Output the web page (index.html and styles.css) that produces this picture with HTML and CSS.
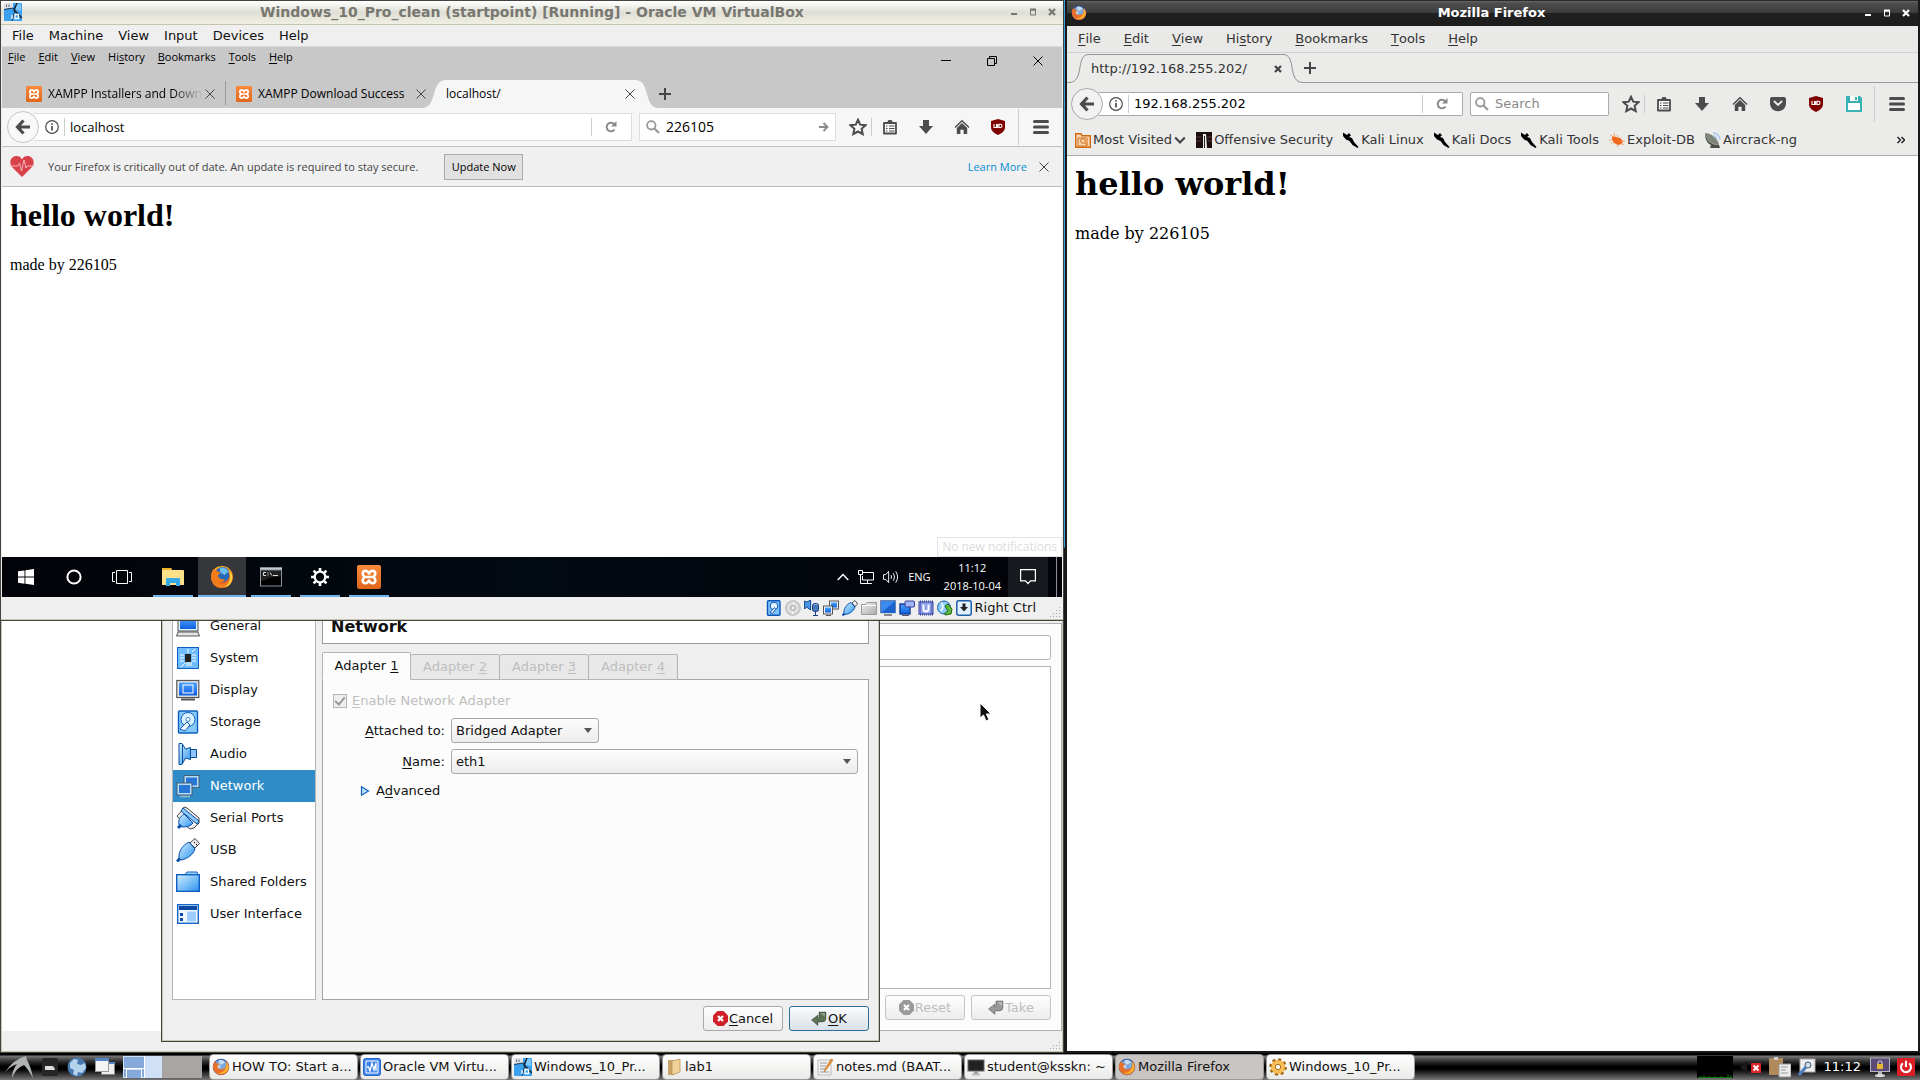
FILE: index.html
```html
<!DOCTYPE html>
<html lang="en">
<head>
<meta charset="utf-8">
<title>Desktop</title>
<link rel="stylesheet" href="styles.css">
</head>
<body>
<svg class="sprite" aria-hidden="true">
  <defs>
    <linearGradient id="blue" x1="0" y1="0" x2="1" y2="1"><stop offset="0" stop-color="#d3efff"/><stop offset="1" stop-color="#2b93f0"/></linearGradient>
    <linearGradient id="screen" x1="0" y1="0" x2="0" y2="1"><stop offset="0" stop-color="#4fa3ff"/><stop offset="1" stop-color="#0f5ee0"/></linearGradient>
    <linearGradient id="gold" x1="0" y1="0" x2="0" y2="1"><stop offset="0" stop-color="#ffb21e"/><stop offset="1" stop-color="#e0421c"/></linearGradient>
    <linearGradient id="grey" x1="0" y1="0" x2="1" y2="1"><stop offset="0" stop-color="#f2f2f2"/><stop offset="1" stop-color="#a8a8a8"/></linearGradient>
    <linearGradient id="orange" x1="0" y1="0" x2="0" y2="1"><stop offset="0" stop-color="#fb8a3c"/><stop offset="1" stop-color="#e0661a"/></linearGradient>
  </defs>
  <symbol id="i-vm10" viewBox="0 0 18 18"><rect width="18" height="18" rx="1" fill="#3aa0f0"/><path d="M11 1h6v7l-5-1z" fill="#7ec8ff"/><path d="M0 0h9v5L0 6z" fill="#dfe5ea"/><path d="M0 6.500 9 5l2 2-3 11" stroke="#22384c" fill="none"/><path d="m13 0-3 7 8 8" stroke="#16222e" stroke-width="1.500" fill="none"/><path d="M8 12v4M11 11.500h3.500v4H11z" stroke="#fff" stroke-width="1.300" fill="none"/><path d="M2.500 1.500v2.500M5 1.500v2.500" stroke="#666"/></symbol>
  <symbol id="i-firefox" viewBox="0 0 24 24"><circle cx="12" cy="12" r="11" fill="url(#gold)"/><circle cx="12.500" cy="9.500" r="7.500" fill="#2a68b8"/><path d="M10 3c4-1 8 1 9 5-2-1-3 0-4 2-3-1-6-3-5-7z" fill="#6cc0f0"/><path d="M1.500 9C2 6 3 4.500 4 4l1.500 2C7 6 8 6 9 7l2 1-3 2c0 3 3 5 7 4-1 3-4 4-7 3 3 3 9 2 11-3 1-3 0-6-1-8 4 3 5 9 2 13-4 5-12 5-16 1C1 16 1 12 1.500 9z" fill="#f07c1c"/><path d="M19 5c4 4 4 9 2 13-2 3-5 4-7 4 5-2 8-8 5-17z" fill="#ffd23c"/></symbol>
  <symbol id="i-firefox-old" viewBox="0 0 24 24"><circle cx="12" cy="12" r="11" fill="#2b4fa0"/><circle cx="12" cy="10" r="8" fill="#7fa9da"/><path d="M9 3c4-1 7 0 8 3l-3 2-4 1zM6 9l5 1v4l-4-1z" fill="#c6dcf2"/><path d="M1.500 8 4 4l2 3 4 1-3 3c1 4 5 5 9 3 3-1 4-6 2-10 5 3 6 9 3 14-4 6-13 6-17 1-3-3-3-7-2.500-11z" fill="#e8702a"/><path d="M19 5c5 6 3 12-2 15-4 2-8 1-10 0 8 1 14-6 12-15z" fill="#ffb52e"/></symbol>
  <symbol id="i-xampp" viewBox="0 0 24 24"><rect width="24" height="24" rx="2" fill="url(#orange)"/><path d="M12 8.500C11 6 8 5 6.500 6.500 5 8 5.500 10.500 8 12c-2.500 1.500-3 4-1.500 5.500S11 18 12 15.500c1 2.500 4 3.500 5.500 2S18.500 13.500 16 12c2.500-1.500 3-4 1.500-5.500S13 6 12 8.500zM9 12h6" fill="none" stroke="#fff" stroke-width="2.600" stroke-linejoin="round"/></symbol>
  <symbol id="i-close" viewBox="0 0 10 10"><path d="m.5.5 9 9m0-9-9 9" stroke="currentColor" fill="none"/></symbol>
  <symbol id="i-closeb" viewBox="0 0 8 8"><path d="m1 1 6 6m0-6L1 7" stroke="currentColor" stroke-width="2.200" fill="none"/></symbol>
  <symbol id="i-minb" viewBox="0 0 8 8"><path d="M1 6h6" stroke="currentColor" stroke-width="2"/></symbol>
  <symbol id="i-maxb" viewBox="0 0 8 8"><path d="M1.500 2v5h5V2z" stroke="currentColor" fill="none"/><path d="M1 1.500h6" stroke="currentColor" stroke-width="2"/></symbol>
  <symbol id="i-min" viewBox="0 0 10 10"><path d="M0 4.500h10" stroke="currentColor"/></symbol>
  <symbol id="i-restore" viewBox="0 0 10 10"><path d="M.5 2.500h7v7h-7zM2.500 2V.5h7v7H8" stroke="currentColor" fill="none"/></symbol>
  <symbol id="i-plus" viewBox="0 0 12 12"><path d="M6 0v12M0 6h12" stroke="currentColor" stroke-width="2"/></symbol>
  <symbol id="i-back" viewBox="0 0 16 16"><path d="M8.500 1.500 2.500 8l6 6.500M3 8h12" stroke="currentColor" stroke-width="3.200" fill="none"/></symbol>
  <symbol id="i-info" viewBox="0 0 14 14"><circle cx="7" cy="7" r="6.300" fill="none" stroke="currentColor" stroke-width="1.200"/><path d="M7 6v4.500M7 3.300v1.500" stroke="currentColor" stroke-width="1.700"/></symbol>
  <symbol id="i-reload" viewBox="0 0 12 12"><path d="M9.500 8.500A4.300 4.300 0 1 1 9 3" fill="none" stroke="currentColor" stroke-width="1.900"/><path d="M11.500 0v5.500H6z" fill="currentColor"/></symbol>
  <symbol id="i-search" viewBox="0 0 14 14"><circle cx="5.300" cy="5.300" r="4.200" fill="none" stroke="currentColor" stroke-width="1.800"/><path d="m8.500 8.500 4.500 4.500" stroke="currentColor" stroke-width="2.200"/></symbol>
  <symbol id="i-go" viewBox="0 0 10 10"><path d="M0 5h8M4.500 1l4 4-4 4" stroke="currentColor" stroke-width="1.800" fill="none"/></symbol>
  <symbol id="i-star" viewBox="0 0 16 16"><path d="m8 1.600 2 4.300 4.700.5-3.500 3.200 1 4.700L8 12l-4.200 2.300 1-4.700L1.300 6.400 6 5.900z" fill="none" stroke="currentColor" stroke-width="1.800"/></symbol>
  <symbol id="i-clip" viewBox="0 0 14 16"><path d="M1 4h12v10.500H1z" fill="#fff" fill-opacity=".6" stroke="currentColor" stroke-width="1.800" stroke-linejoin="round"/><path d="M4 3.500 5.500 1h3L10 3.500z" fill="currentColor"/><path d="M3 7h1.500M3 9.500h1.500M3 12h1.500M6 7h5.500M6 9.500h5.500M6 12h5.500" fill="none" stroke="currentColor" stroke-width="1.200"/></symbol>
  <symbol id="i-down" viewBox="0 0 14 16"><path d="M4 1h6v6h4l-7 8-7-8h4z" fill="currentColor"/></symbol>
  <symbol id="i-home" viewBox="0 0 16 16"><path d="m1 8.500 7-6.700 7 6.700" fill="none" stroke="currentColor" stroke-width="1.500"/><path d="M2.800 9 8 4l5.200 5v6H9.600v-4.300H6.400V15H2.800z" fill="currentColor"/></symbol>
  <symbol id="i-ublock" viewBox="0 0 14 16"><path d="M7 0 14 2v6c0 4-3 6-7 8-4-2-7-4-7-8V2z" fill="#800000"/><path d="M3 5v3.500h2.500V5M8 5.300h1.500c2 0 2 3.200 0 3.200H8zM6.700 9V5" fill="none" stroke="#fff" stroke-width="1.100"/></symbol>
  <symbol id="i-menu" viewBox="0 0 16 14"><path d="M1.500 1.500h13M1.500 7h13M1.500 12.500h13" stroke="currentColor" stroke-width="3" stroke-linecap="round"/></symbol>
  <symbol id="i-pocket" viewBox="0 0 16 14"><path d="M2 0h12q2 0 2 2v4c0 11-16 11-16 0V2q0-2 2-2z" fill="currentColor"/><path d="m4.500 4.500 3.500 3.500 3.500-3.500" fill="none" stroke="#ebebea" stroke-width="1.900" stroke-linecap="round"/></symbol>
  <symbol id="i-floppy" viewBox="0 0 16 16"><path d="M0 0h14l2 2v14H0z" fill="#37b3b5"/><path d="M2 7h12v7H2zM4 0h8v5H4z" fill="#fff"/><path d="M9 1h2v3H9z" fill="#37b3b5"/></symbol>
  <symbol id="i-heart" viewBox="0 0 24 21"><path d="M12 21 2 11C-2 5 2 0 6.500 0 9 0 11 1 12 3.500 13 1 15 0 17.500 0 22 0 26 5 22 11z" fill="#d8404a"/><path d="M0 10h8l1.500-3 2 8 2.500-11 2 8 1-2h7" fill="none" stroke="#f3b6b9"/></symbol>
  <symbol id="i-folder-visit" viewBox="0 0 16 16"><path d="M.7 1.700H6l1 2h8.300v11.600H.7z" fill="#fbd9b5" stroke="#d06a10" stroke-width="1.400"/><circle cx="8" cy="9" r="2.300" fill="none" stroke="#d06a10"/><path d="M10 11l2 2M3 6h9v8H3z" stroke="#d06a10" fill="none"/></symbol>
  <symbol id="i-offsec" viewBox="0 0 16 16"><path d="M0 0h16v16H0z" fill="#1c0f10"/><path d="M7 2h3l1 14H7z" fill="#eee"/><path d="M8.500 4v12" stroke="#222"/><path d="M0 5h5M11 5h5M0 9h5M12 9h4" stroke="#5a3436"/></symbol>
  <symbol id="i-kali" viewBox="0 0 16 16"><path d="M0 .5 4 3l2-2 2 2.500-2 1.500 3 1 2 4 4.500 5-1 1-5-3-3-4-3.500-1.500L0 4z" fill="#000"/></symbol>
  <symbol id="i-exploit" viewBox="0 0 16 16"><path d="m3 4 4 1 4 1 3 3-1 3-4 1-4-2-2-4z" fill="#ef6718"/><path d="m1 3 4 2m0-4 1 4M0 8h4M2 12l3-2m3-7 1 3m4-1-2 2m5 2-4 0m3 4-3-2m-3 4-1-2" stroke="#f3a77b" fill="none"/></symbol>
  <symbol id="i-dish" viewBox="0 0 16 16"><path d="M0 1c2 8 6 12 14 12l1 3H5l1-3C2 11 0 7 0 1z" fill="#4a4f45"/><path d="M0 1c6 0 13 5 14 12C7 13 2 9 0 1z" fill="#7e8578"/><path d="M8 1c4 0 7 3 7 7M8 4c2 0 4 2 4 4" fill="none" stroke="#a9c6ee" stroke-width="1.500"/></symbol>
  <symbol id="i-win" viewBox="0 0 16 16"><path d="M0 2.300 6.500 1.400v6.200H0zM7.400 1.300 16 0v7.600H7.400zM0 8.500h6.500v6.200L0 13.800zM7.400 8.500H16V16l-8.600-1.200z" fill="#fff"/></symbol>
  <symbol id="i-cortana" viewBox="0 0 16 16"><circle cx="8" cy="8" r="6.600" fill="none" stroke="#fff" stroke-width="2"/></symbol>
  <symbol id="i-taskview" viewBox="0 0 20 14"><path d="M4.500.5h11v13h-11zM3 2.500H.5v9H3M17 2.500h2.500v9H17" fill="none" stroke="#fff"/></symbol>
  <symbol id="i-explorer" viewBox="0 0 22 18"><path d="M0 1q0-1 1-1h8l1 2h11q1 0 1 1v14H0z" fill="#ffe08a"/><path d="M0 0h9l1 2H0z" fill="#f0b42c"/><path d="M4 18v-7q0-1 1-1h12q1 0 1 1v7h-4v-3H8v3z" fill="#35a9e8"/></symbol>
  <symbol id="i-cmd" viewBox="0 0 22 19"><path d="M0 0h22v19H0z" fill="#8b9299"/><path d="M1 3h20v15H1z" fill="#000"/><path d="M0 0h22v2H0z" fill="#c3cad2"/><path d="M6 5H3.500v3H6M8 5v1m0 1v1m2-3 2 3m1 0h5" stroke="#ddd" fill="none"/><path d="m1 14 10-4 10-1v-6H1z" fill="#fff" opacity=".12"/></symbol>
  <symbol id="i-gear" viewBox="0 0 18 18"><circle cx="9" cy="9" r="5.300" fill="none" stroke="#fff" stroke-width="2.200"/><path d="M9 0v3M9 15v3M0 9h3M15 9h3M2.600 2.600l2.200 2.200M13.200 13.200l2.200 2.200M2.600 15.400l2.200-2.200M13.200 4.800l2.200-2.200" stroke="#fff" stroke-width="2.600"/></symbol>
  <symbol id="i-up" viewBox="0 0 12 8"><path d="m.7 7 5.300-5.500L11.300 7" fill="none" stroke="#fff" stroke-width="1.400"/></symbol>
  <symbol id="i-net" viewBox="0 0 16 14"><path d="M5 2.500h10.500v7.500H4.500V6M9.500 10v3M6 13.500h8M.5.500h4v4h-4zM2.500 5v8.500H6" fill="none" stroke="#fff"/></symbol>
  <symbol id="i-sound" viewBox="0 0 17 14"><path d="M.5 4.500h2.500l3-3.500v12l-3-3.500H.5zM8.500 5q1.300 2 0 4M11 3q2.600 4 0 8M13.500 1q4 6 0 12" fill="none" stroke="#fff"/></symbol>
  <symbol id="i-action" viewBox="0 0 16 16"><path d="M.6.600h14.800v11.200H10.500L8 14.500l-2.500-2.700H.6z" fill="none" stroke="#fff" stroke-width="1.200"/></symbol>
  <symbol id="s-hdd" viewBox="0 0 16 16"><rect x="1.500" y=".7" width="12.500" height="14.600" rx="1" fill="#7cc4fb" stroke="#0b55b5" stroke-width="1.400"/><circle cx="8" cy="6" r="3.800" fill="#e6f5ff" stroke="#0b55b5"/><path d="m4 12.500 4.500-5 1 2-3 4z" fill="#fff" stroke="#0b55b5"/></symbol>
  <symbol id="s-cd" viewBox="0 0 16 16"><circle cx="8" cy="8" r="7.200" fill="#ddd" stroke="#aaa"/><circle cx="8" cy="8" r="2.200" fill="#f6f6f6" stroke="#999"/><path d="M8 1.500 9 5M8 14.500 7 11" stroke="#fff"/></symbol>
  <symbol id="s-audio" viewBox="0 0 16 16"><path d="M.6 1v8l2-2 4 3V0L3 2z" fill="#4a95e8" stroke="#12488f"/><rect x="8.500" y="3.500" width="6" height="8" rx="2" fill="#7fb4ee" stroke="#173f7c"/><path d="M9 6h5M9 8h5M9 10h5M11.500 12v3M9 15.500h5" stroke="#173f7c"/></symbol>
  <symbol id="s-net" viewBox="0 0 16 16"><rect x="6.500" y="1" width="9" height="8" fill="#f2f2f2" stroke="#555"/><rect x="8" y="2.500" width="6" height="5" fill="url(#screen)"/><rect x=".5" y="6" width="9" height="8" fill="#f2f2f2" stroke="#555"/><rect x="2" y="7.500" width="6" height="5" fill="url(#screen)"/><path d="M3 15.500h5" stroke="#555"/></symbol>
  <symbol id="s-usb" viewBox="0 0 16 16"><path d="m10 3 3-2.500L15.700 4 13 6.500z" fill="#eee" stroke="#555"/><path d="M2 14C1 9 5 4 9 2.500L13 7c-2 5-6 7-10 7.500z" fill="url(#blue)" stroke="#0b4fa8"/><path d="m.5 15.500 2-2" stroke="#0b4fa8" stroke-width="2"/></symbol>
  <symbol id="s-folder" viewBox="0 0 16 16"><path d="M.5 4.500h4l1.500-2h9.500v12H.5z" fill="url(#grey)" stroke="#999"/><path d="M1 5.500h14" stroke="#fff"/></symbol>
  <symbol id="s-display" viewBox="0 0 16 16"><rect x=".7" y=".7" width="14.600" height="12" fill="#3d8bf0" stroke="#4c6ea0"/><path d="M1 13 15 1v12z" fill="#1c62cf"/><path d="M4 15h8" stroke="#888" stroke-width="2"/></symbol>
  <symbol id="s-rec" viewBox="0 0 16 16"><rect x="1" y="4" width="10" height="10" fill="url(#screen)" stroke="#103f94" stroke-width="1.400"/><rect x="6" y="1" width="9.500" height="6" rx="1" fill="#9fb3ee" stroke="#3c3c9f"/><path d="M3 15.500h7" stroke="#555"/></symbol>
  <symbol id="s-chip" viewBox="0 0 16 16"><path d="M1 1.500v13h14v-13z" fill="none" stroke="#3947a5" stroke-width="2" stroke-dasharray="1 1"/><rect x="2" y="2" width="12" height="12" fill="#8f9fea" stroke="#3947a5"/><path d="M5.500 4.500V9q0 2.500 2.500 2.500T10.500 9V4.500" fill="none" stroke="#fff" stroke-width="2"/></symbol>
  <symbol id="s-mouse" viewBox="0 0 16 16"><circle cx="7" cy="7.500" r="6.500" fill="#8ccafa" stroke="#1d5fae"/><path d="M4 3q4 3 0 8" stroke="#e8f6ff" stroke-width="2" fill="none"/><path d="m8 6 3-2 4 5-1 5-6 1v-2l3-2z" fill="#5dbb3c" stroke="#1e6516"/></symbol>
  <symbol id="s-key" viewBox="0 0 16 16"><rect x=".8" y=".8" width="14.400" height="14.400" rx="2" fill="#e2f1ff" stroke="#1f5da8" stroke-width="1.500"/><path d="M6.500 3.500h3V7H12l-4 4.500L4 7h2.500z" fill="#222"/></symbol>
  <symbol id="d-general" viewBox="0 0 24 24"><rect x="2" y="2" width="20" height="15" fill="#dff0ff" stroke="#555"/><rect x="4" y="4" width="16" height="11" fill="url(#screen)"/><path d="M2 18h20l1.500 4h-23z" fill="#e4e4e4" stroke="#555"/></symbol>
  <symbol id="d-system" viewBox="0 0 24 24"><rect x="1.500" y="1.500" width="21" height="21" fill="#6fbcff" stroke="#0f5fc0"/><path d="M12 3v4M4 9h4M4 12h4M4 15h4M16 9h4M16 12h4M16 15h4M11 16v4M13 16v4M15 16v4M9 17l-4 4M16 6l3-3" stroke="#fff"/><rect x="9" y="8" width="6" height="8" fill="#222"/></symbol>
  <symbol id="d-display" viewBox="0 0 24 24"><rect x=".8" y="2.500" width="22" height="17" fill="#e8e8e8" stroke="#555" stroke-width="1.200"/><rect x="3" y="4.500" width="18" height="13" fill="url(#screen)"/><rect x="7" y="7" width="10" height="8" fill="none" stroke="#fff"/><path d="M5 21.500h14" stroke="#555" stroke-width="2"/></symbol>
  <symbol id="d-storage" viewBox="0 0 24 24"><rect x="2.500" y="1" width="19" height="22" rx="1" fill="#86c9fc" stroke="#0f5fc0" stroke-width="1.400"/><circle cx="12" cy="9.500" r="7" fill="#d8efff" stroke="#0f5fc0"/><circle cx="12" cy="9.500" r="2" fill="#fff" stroke="#3c82c8"/><path d="m4 19 7-7 3 3-5 6z" fill="#f2faff" stroke="#0f5fc0"/></symbol>
  <symbol id="d-audio" viewBox="0 0 24 24"><path d="M14 7.500h6.500v8H14z" fill="#8fc6f8" stroke="#0b4b96"/><path d="M3 1.500h3L9.500 7l5-1.500v12L9.500 16 6 22.500H3z" fill="url(#blue)" stroke="#0b4b96"/><path d="M6.500 2v20" stroke="#0b4b96"/></symbol>
  <symbol id="d-network" viewBox="0 0 24 24"><rect x="8" y="1.500" width="15" height="12" fill="#b9dcf5" stroke="#3f5f7a"/><rect x="10" y="3.500" width="11" height="8" fill="#2677d8"/><rect x="1" y="9" width="15" height="12" fill="#b9dcf5" stroke="#3f5f7a"/><rect x="3" y="11" width="11" height="8" fill="#2677d8"/><path d="M4 22.500h10" stroke="#9db8cc" stroke-width="1.500"/></symbol>
  <symbol id="d-serial" viewBox="0 0 24 24"><path d="m1 10 3-3 4-6 3 1 12 10v5l-5 5-4 1-4-3z" fill="#eee" stroke="#444"/><path d="M3 19c-1-6 1-8 5-11l9 9c-2 3-6 4-11 4z" fill="url(#blue)" stroke="#0b4fa8"/><path d="m7 2 16 13-2 3L5 5z" fill="#8cc9fb" stroke="#0b4fa8"/><path d="m2 22 3-3" stroke="#0b4fa8" stroke-width="3"/></symbol>
  <symbol id="d-usb" viewBox="0 0 24 24"><path d="m14 5 5-4.500 4.500 5L19 10z" fill="#eee" stroke="#444"/><path d="M3 21C2 13 7 7 13 4l6 7c-2 6-8 10-14 11z" fill="url(#blue)" stroke="#0b4fa8"/><path d="m1 23.500 3-3" stroke="#0b4fa8" stroke-width="3"/><path d="M18 4.500h1M20 6.500h1" stroke="#222" stroke-width="1.500"/></symbol>
  <symbol id="d-folder" viewBox="0 0 24 24"><path d="M9 5l2-3h10l1 3" fill="#9fd6ff" stroke="#0f5fc0"/><rect x=".7" y="4.700" width="22.600" height="16.600" fill="url(#blue)" stroke="#0f5fc0" stroke-width="1.400"/></symbol>
  <symbol id="d-ui" viewBox="0 0 24 24"><rect x="1.700" y="2.700" width="20.600" height="18.600" fill="#f0f8ff" stroke="#1565c8" stroke-width="1.400"/><path d="M3 4h18v4H3z" fill="#0d49a0"/><rect x="11" y="9.500" width="9" height="10" fill="#9fccff"/><path d="M4 11h3v3H4zM4 16h3v3H4z" fill="#0d49a0"/></symbol>
  <symbol id="i-cancel" viewBox="0 0 15 15"><path d="M4.500 0h6L15 4.500v6L10.500 15h-6L0 10.500v-6z" fill="currentColor"/><path d="m5 5 5 5m0-5-5 5" stroke="#fff" stroke-width="2.200"/></symbol>
  <symbol id="i-enter" viewBox="0 0 16 16"><path d="M8 1h7v6q0 4-4 4H7v3.500L.5 9 7 4v3h1z" fill="currentColor" stroke="#0000004d"/><path d="M9 2h5v4z" fill="#fff" opacity=".3"/></symbol>
  <symbol id="t-kali" viewBox="0 0 28 22"><path d="M0 16Q9 3 21 0l1 4q4 7 6 18-5-9-9-13Q11 12 7 22q0-8 5-14Q6 10 0 16z" fill="#aeb2b0"/></symbol>
  <symbol id="t-term" viewBox="0 0 16 18"><rect width="16" height="18" rx="2" fill="#262626"/><path d="M3 8h7q2 0 3 4H3z" fill="#ddd"/></symbol>
  <symbol id="t-globe" viewBox="0 0 20 20"><circle cx="10" cy="10" r="9.500" fill="#4878ae"/><path d="m3 6 4-4 4 1-1 4 4 1 4-2 1 5-4 5-4-1-1 4-4-2 1-4-4-2z" fill="#b6d3ee"/></symbol>
  <symbol id="t-wins" viewBox="0 0 20 18"><rect x="6.500" y="4.500" width="13" height="12" fill="#eee" stroke="#888"/><path d="M6 4h14v2H6z" fill="#5685c4"/><rect x=".5" y="1.500" width="13" height="12" fill="#f4f4f4" stroke="#999"/><path d="M0 0h14v3H0z" fill="#5685c4"/></symbol>
  <symbol id="t-vbox" viewBox="0 0 18 18"><rect x=".5" y=".5" width="17" height="17" rx="2" fill="#3b82ea" stroke="#2867c5"/><path d="M3 3h12v12H3z" fill="none" stroke="#fff"/><path d="M4 9h1.500l1.500 4 2-8 2 7 2-7v8" fill="none" stroke="#fff" stroke-width="1.300"/></symbol>
  <symbol id="t-folder" viewBox="0 0 18 18"><path d="M3 2h6v15H3z" fill="#c9a368"/><path d="m7 3 8-2v13l-8 3z" fill="#efd19a" stroke="#b58b4c" stroke-width=".700"/></symbol>
  <symbol id="t-note" viewBox="0 0 18 18"><path d="M2 2h13v15H2z" fill="#f2f2f2" stroke="#bbb"/><path d="M4 5h7M4 8h6M4 11h6M4 14h9" stroke="#999"/><path d="m17 2-7 10-2 2 1-3 6-10z" fill="#ef9430" stroke="#b6651a" stroke-width=".500"/></symbol>
  <symbol id="t-screen" viewBox="0 0 18 18"><rect x="1" y="2" width="16" height="11" fill="#222" stroke="#666"/><path d="M7 13h4v3H7z" fill="#999"/><path d="M5 16.500h8" stroke="#bbb" stroke-width="2"/></symbol>
  <symbol id="t-gear" viewBox="0 0 20 20"><circle cx="10" cy="10" r="8" fill="#f4b342" stroke="#a0620e" stroke-width="3.500" stroke-dasharray="3.140 3.140"/><circle cx="10" cy="10" r="7.500" fill="#f7bf57"/><circle cx="10" cy="10" r="3" fill="#fff" stroke="#a0620e"/></symbol>
  <symbol id="y-mute" viewBox="0 0 22 18"><path d="M0 9 7 3v13z" fill="#1a1a1a"/><rect x="11" y="5" width="10" height="10" rx="1" fill="#d8262c"/><path d="m13.500 7.500 5 5m0-5-5 5" stroke="#fff" stroke-width="1.800"/></symbol>
  <symbol id="y-clip" viewBox="0 0 22 20"><rect x="0" y="1" width="14" height="17" fill="#b08a5c"/><path d="M5 0h4v3H5z" fill="#ccc"/><path d="M10 7h12v13H10z" fill="#ececec" stroke="#999"/><path d="M12 10h7M12 13h5M12 16h7" stroke="#999"/></symbol>
  <symbol id="y-find" viewBox="0 0 18 18"><rect x="2" y="1" width="15" height="13" fill="#eee" stroke="#aaa"/><circle cx="10" cy="7" r="3" fill="#cde" stroke="#456"/><path d="m8 9-7 8" stroke="#4c7ec0" stroke-width="3"/></symbol>
  <symbol id="y-lock" viewBox="0 0 20 20"><rect x=".5" y="1" width="19" height="13.500" fill="#5b4a77" stroke="#b9b3c4"/><path d="M8 7V5q2-2.500 4 0v2" stroke="#ddd" fill="none"/><rect x="7" y="7" width="6" height="5" fill="#e6b62e"/><path d="M8 15h4v3H8z" fill="#bbb"/><ellipse cx="10" cy="18.500" rx="5" ry="1.500" fill="#ddd"/></symbol>
  <symbol id="y-power" viewBox="0 0 17 17"><rect width="17" height="17" rx="1" fill="#dc1f26"/><path d="M5.500 5a4.700 4.700 0 1 0 6 0M8.500 2.500v6" fill="none" stroke="#fff" stroke-width="2"/></symbol>
</svg>

<main class="desktop">
  <section class="left-pane">

    <section class="window vm" aria-label="Virtual machine">
      <header class="titlebar light">
        <svg class="i18"><use href="#i-vm10"/></svg>
        <h2 class="title">Windows_10_Pro_clean (startpoint) [Running] - Oracle VM VirtualBox</h2>
        <div class="wm-buttons">
          <button aria-label="Minimize"><svg class="i8"><use href="#i-minb"/></svg></button>
          <button aria-label="Maximize"><svg class="i8"><use href="#i-maxb"/></svg></button>
          <button aria-label="Close"><svg class="i8"><use href="#i-closeb"/></svg></button>
        </div>
      </header>
      <nav class="vm-menu">
        <button>File</button><button>Machine</button><button>View</button><button>Input</button><button>Devices</button><button>Help</button>
      </nav>

      <div class="guest">
        <div class="guest-top">
          <nav class="guest-menu">
            <button><u>F</u>ile</button><button><u>E</u>dit</button><button><u>V</u>iew</button><button>Hi<u>s</u>tory</button><button><u>B</u>ookmarks</button><button><u>T</u>ools</button><button><u>H</u>elp</button>
          </nav>
          <div class="guest-controls">
            <button aria-label="Minimize"><svg class="i10"><use href="#i-min"/></svg></button>
            <button aria-label="Restore"><svg class="i10"><use href="#i-restore"/></svg></button>
            <button aria-label="Close"><svg class="i10"><use href="#i-close"/></svg></button>
          </div>
        </div>
        <div class="guest-tabs">
          <div class="gtab split"><svg class="i16"><use href="#i-xampp"/></svg><button class="gtab-label fade">XAMPP Installers and Downl</button><button class="x" aria-label="Close tab"><svg class="i10"><use href="#i-close"/></svg></button></div>
          <div class="gtab"><svg class="i16"><use href="#i-xampp"/></svg><button class="gtab-label">XAMPP Download Success</button><button class="x" aria-label="Close tab"><svg class="i10"><use href="#i-close"/></svg></button></div>
          <div class="gtab active">
            <svg class="edge" viewBox="0 0 24 28"><path d="M0 28c16 0 8-28 24-28v28z" fill="#f6f6f6"/></svg>
            <div class="gtab-body"><button class="gtab-label">localhost/</button><button class="x" aria-label="Close tab"><svg class="i10"><use href="#i-close"/></svg></button></div>
            <svg class="edge" viewBox="0 0 24 28"><path d="M24 28C8 28 16 0 0 0v28z" fill="#f6f6f6"/></svg>
          </div>
          <button class="newtab" aria-label="New tab"><svg class="i12"><use href="#i-plus"/></svg></button>
        </div>
        <div class="guest-nav">
          <button class="back" aria-label="Back"><svg class="i16"><use href="#i-back"/></svg></button>
          <div class="field url">
            <svg class="i14"><use href="#i-info"/></svg><i class="bar"></i>
            <input type="text" aria-label="Address" value="localhost">
            <i class="bar"></i><button class="reload" aria-label="Reload"><svg class="i12"><use href="#i-reload"/></svg></button>
          </div>
          <div class="field search">
            <svg class="i14"><use href="#i-search"/></svg>
            <input type="text" aria-label="Search" value="226105">
            <button aria-label="Go"><svg class="i10"><use href="#i-go"/></svg></button>
          </div>
          <div class="tools">
            <button class="t-star" aria-label="Bookmark"><svg class="i18"><use href="#i-star"/></svg></button><i class="bar"></i>
            <button aria-label="Bookmarks list"><svg class="i16"><use href="#i-clip"/></svg></button>
            <button aria-label="Downloads"><svg class="i16"><use href="#i-down"/></svg></button>
            <button aria-label="Home"><svg class="i16"><use href="#i-home"/></svg></button>
            <button aria-label="Blocker"><svg class="i16"><use href="#i-ublock"/></svg></button>
            <i class="bar tall"></i>
            <button class="t-menu" aria-label="Menu"><svg class="i16"><use href="#i-menu"/></svg></button>
          </div>
        </div>
        <div class="notice">
          <svg class="heart"><use href="#i-heart"/></svg>
          <p>Your Firefox is critically out of date. An update is required to stay secure.</p>
          <button class="update">Update Now</button>
          <a href="#" class="learn">Learn More</a>
          <button aria-label="Dismiss"><svg class="i10"><use href="#i-close"/></svg></button>
        </div>
        <article class="page guest-page">
          <h1>hello world!</h1>
          <p>made by 226105</p>
          <div class="tooltip">No new notifications</div>
        </article>
        <footer class="guest-taskbar">
          <button class="w-btn wide" aria-label="Start"><svg class="i16"><use href="#i-win"/></svg></button>
          <button class="w-btn wide" aria-label="Cortana"><svg class="i16"><use href="#i-cortana"/></svg></button>
          <button class="w-btn wide" aria-label="Task view"><svg class="i20"><use href="#i-taskview"/></svg></button>
          <button class="w-btn run" aria-label="Explorer"><svg class="i22"><use href="#i-explorer"/></svg></button>
          <button class="w-btn run current" aria-label="Firefox"><svg class="i24"><use href="#i-firefox"/></svg></button>
          <button class="w-btn run" aria-label="Command Prompt"><svg class="i22"><use href="#i-cmd"/></svg></button>
          <button class="w-btn run" aria-label="Settings"><svg class="i18"><use href="#i-gear"/></svg></button>
          <button class="w-btn run" aria-label="XAMPP"><svg class="i24"><use href="#i-xampp"/></svg></button>
          <div class="w-tray">
            <svg class="i12"><use href="#i-up"/></svg>
            <svg class="i16"><use href="#i-net"/></svg>
            <svg class="i16"><use href="#i-sound"/></svg>
            <span>ENG</span>
            <time>11:12<br>2018-10-04</time>
            <button class="action" aria-label="Notifications"><svg class="i16"><use href="#i-action"/></svg></button>
          </div>
        </footer>
      </div>

      <footer class="vm-status">
        <svg class="i16"><use href="#s-hdd"/></svg><svg class="i16"><use href="#s-cd"/></svg><svg class="i16"><use href="#s-audio"/></svg><svg class="i16"><use href="#s-net"/></svg><svg class="i16"><use href="#s-usb"/></svg><svg class="i16"><use href="#s-folder"/></svg><svg class="i16"><use href="#s-display"/></svg><svg class="i16"><use href="#s-rec"/></svg><svg class="i16"><use href="#s-chip"/></svg><svg class="i16"><use href="#s-mouse"/></svg><svg class="i16"><use href="#s-key"/></svg>
        <span>Right Ctrl</span>
        <i class="grip"></i>
      </footer>
    </section>

    <section class="window settings" aria-label="Settings">
      <div class="settings-body">
        <ul class="categories">
          <li><svg class="i24"><use href="#d-general"/></svg>General</li>
          <li><svg class="i24"><use href="#d-system"/></svg>System</li>
          <li><svg class="i24"><use href="#d-display"/></svg>Display</li>
          <li><svg class="i24"><use href="#d-storage"/></svg>Storage</li>
          <li><svg class="i24"><use href="#d-audio"/></svg>Audio</li>
          <li class="selected"><svg class="i24"><use href="#d-network"/></svg>Network</li>
          <li><svg class="i24"><use href="#d-serial"/></svg>Serial Ports</li>
          <li><svg class="i24"><use href="#d-usb"/></svg>USB</li>
          <li><svg class="i24"><use href="#d-folder"/></svg>Shared Folders</li>
          <li><svg class="i24"><use href="#d-ui"/></svg>User Interface</li>
        </ul>
        <div class="details">
          <h3>Network</h3>
          <div class="adapter-tabs">
            <button class="active">Adapter <u>1</u></button><button disabled>Adapter <u>2</u></button><button disabled>Adapter <u>3</u></button><button disabled>Adapter <u>4</u></button>
          </div>
          <form class="adapter">
            <label class="enable"><input type="checkbox" checked disabled><span><u>E</u>nable Network Adapter</span></label>
            <label class="row-label" for="attached"><u>A</u>ttached to:</label>
            <div class="select short"><select id="attached"><option>Bridged Adapter</option></select></div>
            <label class="row-label" for="ifname"><u>N</u>ame:</label>
            <div class="select"><select id="ifname"><option>eth1</option></select></div>
            <button type="button" class="advanced"><svg class="i10" viewBox="0 0 10 10"><path d="M1.500.8v8.400l7-4.200z" fill="#bfe2ff" stroke="#0f5fc0" stroke-width="1.200"/></svg><span>A<u>d</u>vanced</span></button>
          </form>
        </div>
      </div>
      <div class="dialog-buttons">
        <button class="push"><svg class="i15 red"><use href="#i-cancel"/></svg><span><u>C</u>ancel</span></button>
        <button class="push default"><svg class="i16 green"><use href="#i-enter"/></svg><span><u>O</u>K</span></button>
      </div>
    </section>

    <section class="window manager" aria-label="Manager">
      <div class="machines"></div>
      <div class="snapshot">
        <input type="text" aria-label="Name">
        <textarea aria-label="Description"></textarea>
        <div class="snapshot-buttons">
          <button class="push" disabled><svg class="i15"><use href="#i-cancel"/></svg>Reset</button>
          <button class="push" disabled><svg class="i16"><use href="#i-enter"/></svg>Take</button>
        </div>
      </div>
      <i class="grip"></i>
    </section>
    <svg class="pointer" viewBox="0 0 12 20"><path d="M1 0v15l3.500-3 2.500 6 3-1.500-2.700-5.500H12z" fill="#111" stroke="#fff"/></svg>
  </section>

  <section class="browser" aria-label="Mozilla Firefox">
    <header class="titlebar dark">
      <svg class="i16"><use href="#i-firefox-old"/></svg>
      <h2 class="title">Mozilla Firefox</h2>
      <div class="wm-buttons">
        <button aria-label="Minimize"><svg class="i8"><use href="#i-minb"/></svg></button>
        <button aria-label="Maximize"><svg class="i8"><use href="#i-maxb"/></svg></button>
        <button aria-label="Close"><svg class="i8"><use href="#i-closeb"/></svg></button>
      </div>
    </header>
    <nav class="b-menu">
      <button><u>F</u>ile</button><button><u>E</u>dit</button><button><u>V</u>iew</button><button>Hi<u>s</u>tory</button><button><u>B</u>ookmarks</button><button><u>T</u>ools</button><button><u>H</u>elp</button>
    </nav>
    <div class="b-tabs">
      <i class="rule start"></i>
      <div class="b-tab">
        <svg class="edge" viewBox="0 0 20 29"><path d="M0 28.500C16 28.500 6 .5 20 .5" fill="none" stroke="#8f8f8f"/></svg>
        <div class="b-tab-body"><button>http://192.168.255.202/</button><button class="x" aria-label="Close tab"><svg class="i8"><use href="#i-closeb"/></svg></button></div>
        <svg class="edge" viewBox="0 0 20 29"><path d="M20 28.500C4 28.500 14 .5 0 .5" fill="none" stroke="#8f8f8f"/></svg>
      </div>
      <div class="rule"><button class="newtab" aria-label="New tab"><svg class="i12"><use href="#i-plus"/></svg></button></div>
    </div>
    <div class="b-nav">
      <button class="back" aria-label="Back"><svg class="i16"><use href="#i-back"/></svg></button>
      <div class="field url">
        <svg class="i14"><use href="#i-info"/></svg><i class="bar"></i>
        <input type="text" aria-label="Address" value="192.168.255.202">
        <i class="bar"></i><button class="reload" aria-label="Reload"><svg class="i12"><use href="#i-reload"/></svg></button>
      </div>
      <div class="field search">
        <svg class="i14"><use href="#i-search"/></svg>
        <input type="text" aria-label="Search" placeholder="Search">
      </div>
      <div class="tools">
        <button class="t-star" aria-label="Bookmark"><svg class="i18"><use href="#i-star"/></svg></button><i class="bar"></i>
        <button aria-label="Bookmarks list"><svg class="i16"><use href="#i-clip"/></svg></button>
        <button aria-label="Downloads"><svg class="i16"><use href="#i-down"/></svg></button>
        <button aria-label="Home"><svg class="i16"><use href="#i-home"/></svg></button>
        <button aria-label="Pocket"><svg class="i16"><use href="#i-pocket"/></svg></button>
        <button aria-label="Blocker"><svg class="i16"><use href="#i-ublock"/></svg></button>
        <button aria-label="Save"><svg class="i16"><use href="#i-floppy"/></svg></button>
        <i class="bar tall"></i>
        <button class="t-menu" aria-label="Menu"><svg class="i16"><use href="#i-menu"/></svg></button>
      </div>
    </div>
    <nav class="bookmarks">
      <button><svg class="i16"><use href="#i-folder-visit"/></svg>Most Visited<svg class="i12" viewBox="0 0 10 10"><path d="m1 3 4 4 4-4" fill="none" stroke="#444" stroke-width="1.800"/></svg></button>
      <a href="#"><svg class="i16"><use href="#i-offsec"/></svg>Offensive Security</a>
      <a href="#"><svg class="i16"><use href="#i-kali"/></svg>Kali Linux</a>
      <a href="#"><svg class="i16"><use href="#i-kali"/></svg>Kali Docs</a>
      <a href="#"><svg class="i16"><use href="#i-kali"/></svg>Kali Tools</a>
      <a href="#"><svg class="i16"><use href="#i-exploit"/></svg>Exploit-DB</a>
      <a href="#"><svg class="i16"><use href="#i-dish"/></svg>Aircrack-ng</a>
      <button class="more" aria-label="More bookmarks"><svg class="i8" viewBox="0 0 8 8"><path d="m.5 1 3 3-3 3M4.500 1l3 3-3 3" fill="none" stroke="#111" stroke-width="1.300"/></svg></button>
    </nav>
    <article class="page host-page">
      <h1>hello world!</h1>
      <p>made by 226105</p>
    </article>
  </section>
</main>

<footer class="panel">
  <div class="launch">
    <button aria-label="Menu"><svg class="kali-menu"><use href="#t-kali"/></svg></button>
    <button aria-label="Terminal"><svg class="i18"><use href="#t-term"/></svg></button>
    <button aria-label="Web"><svg class="i20"><use href="#t-globe"/></svg></button>
    <button aria-label="Windows"><svg class="i20"><use href="#t-wins"/></svg></button>
    <svg class="pager" viewBox="0 0 79 22"><path d="M0 0h39v22H0z" fill="#cfe0f7"/><path d="M1 1h20v11H1zM1 13h2v8H1zM4 14h15v8H4zM19 13h2v8h-2z" fill="#84a9da"/><path d="M21.500 0v22M0 12.500h21M3.500 13v9M18.500 13v9" stroke="#fff" fill="none"/><path d="M39 0h40v22H39z" fill="#a8a5a2"/></svg>
  </div>
  <div class="tasks">
    <button><svg class="i18"><use href="#i-firefox-old"/></svg><span>HOW TO: Start a...</span></button>
    <button><svg class="i18"><use href="#t-vbox"/></svg><span>Oracle VM Virtu...</span></button>
    <button><svg class="i18"><use href="#i-vm10"/></svg><span>Windows_10_Pr...</span></button>
    <button><svg class="i18"><use href="#t-folder"/></svg><span>lab1</span></button>
    <button><svg class="i18"><use href="#t-note"/></svg><span>notes.md (BAAT...</span></button>
    <button><svg class="i18"><use href="#t-screen"/></svg><span>student@ksskn: ~</span></button>
    <button class="pressed"><svg class="i18"><use href="#i-firefox-old"/></svg><span>Mozilla Firefox</span></button>
    <button><svg class="i18"><use href="#t-gear"/></svg><span>Windows_10_Pr...</span></button>
  </div>
  <div class="tray">
    <svg class="cpu" viewBox="0 0 36 22"><path d="M0 0h36v22H0z" fill="#000"/><path d="M1 21.500h34M3 21v-1M7 21v-2M12 21v-1M18 21v-1M24 21v-1M31 21v-3M34 21v-2" stroke="#0a7a0a"/></svg>
    <svg class="i22"><use href="#y-mute"/></svg>
    <svg class="i22"><use href="#y-clip"/></svg>
    <svg class="i18"><use href="#y-find"/></svg>
    <time>11:12</time>
    <svg class="i20"><use href="#y-lock"/></svg>
    <svg class="i18"><use href="#y-power"/></svg>
  </div>
</footer>
</body>
</html>
```
FILE: styles.css
```css
* { box-sizing: border-box; }

body {
  margin: 0;
  height: 100vh;
  display: grid;
  grid-template-rows: minmax(0, 1fr) 27px;
  overflow: hidden;
  font: 13px/16px "DejaVu Sans", sans-serif;
  color: #111;
  background: #111;
}

button, input, select, textarea { font: inherit; color: inherit; }
button {
  border: 0;
  padding: 0;
  background: none;
  display: inline-flex;
  align-items: center;
  justify-content: center;
  white-space: nowrap;
}
input { border: 0; padding: 0; background: none; outline: 0; min-width: 0; }
a { color: inherit; text-decoration: none; }
h1, h2, h3, p, ul { margin: 0; padding: 0; }
svg { display: block; flex: none; }
u { text-underline-offset: 2px; }

.sprite { position: absolute; width: 0; height: 0; }
.i8 { width: 8px; height: 8px; }
.i10 { width: 10px; height: 10px; }
.i12 { width: 12px; height: 12px; }
.i14 { width: 14px; height: 14px; }
.i15 { width: 15px; height: 15px; }
.i16 { width: 16px; height: 16px; }
.i18 { width: 18px; height: 18px; }
.i20 { width: 20px; height: 20px; }
.i22 { width: 22px; height: 22px; }
.i24 { width: 24px; height: 24px; }

.desktop {
  display: grid;
  grid-template-columns: minmax(0, 1064fr) minmax(0, 856fr);
  grid-template-rows: minmax(0, 1fr);
}
.left-pane {
  position: relative;
  display: grid;
  grid-template-columns: minmax(0, 1fr);
  grid-template-rows: minmax(0, 621fr) minmax(0, 432fr);
}

/* window frames */
.window {
  display: flex;
  flex-direction: column;
  border: 1px solid #44433f;
  background: #efefef;
  grid-column: 1;
  min-width: 0;
}
.titlebar {
  flex: none;
  display: flex;
  align-items: center;
  padding: 0 7px 0 3px;
}
.titlebar .title {
  flex: 1;
  padding-left: 32px;
  text-align: center;
  font-size: 13px;
  line-height: 16px;
  font-weight: bold;
  white-space: nowrap;
}
.titlebar.light {
  height: 24px;
  padding-bottom: 2px;
  background: linear-gradient(#fff, #dfdfd6 50%, #efefe4);
  border-bottom: 1px solid #c6c6ae;
  color: #77766f;
}
.titlebar.light .title { font-size: 14px; }
.titlebar.dark {
  height: 26px;
  padding: 0 8px 2px 4px;
  border-top: 1px solid #2a2a2a;
  background: linear-gradient(#666, #4e4e4e 8%, #3c3c3c 46%, #202020 50%, #1c1c1c);
  color: #fff;
}
.wm-buttons { display: flex; gap: 11px; }

/* virtual machine */
.vm { grid-row: 1; z-index: 2; }
.vm-menu {
  flex: none;
  display: flex;
  gap: 15px;
  height: 22px;
  padding-left: 11px;
  border-bottom: 1px solid #d9d9d9;
}
.guest {
  flex: 1;
  min-height: 0;
  display: flex;
  flex-direction: column;
  margin: 0 1px;
  font-family: "Open Sans", "Noto Sans", sans-serif;
  background: #c8c8c8;
  color: #000;
}
.guest-top {
  flex: none;
  display: flex;
  justify-content: space-between;
  height: 33px;
}
.guest-menu {
  display: flex;
  gap: 13px;
  padding-left: 6px;
  height: 20px;
  font-size: 11px;
}
.guest-controls { display: flex; gap: 36px; padding: 9px 19px 0 0; align-items: flex-start; }
.guest-tabs {
  flex: none;
  display: flex;
  height: 28px;
  padding-left: 14px;
  font-size: 12px;
}
.gtab {
  display: flex;
  align-items: center;
  width: 210px;
  padding: 0 10px;
  color: #000;
}
.gtab.split { border-right: 1px solid #999; border-image: linear-gradient(transparent 8%, #999 8%, #999 85%, transparent 85%) 1; }
.gtab-label { flex: 1; min-width: 0; justify-content: flex-start; overflow: hidden; margin: 0 6px; }
.gtab-label.fade {
  margin-right: 2px;
  -webkit-mask-image: linear-gradient(to right, #000 80%, transparent);
  mask-image: linear-gradient(to right, #000 80%, transparent);
}
.x { color: #444; }
.gtab.active { width: 237px; padding: 0; margin-left: -14px; }
.gtab .edge { width: 24px; height: 28px; }
.gtab-body { flex: 1; display: flex; align-self: stretch; background: #f6f6f6; }
.gtab-body .gtab-label { margin: 0; }
.newtab { color: #444; }

.guest-nav, .b-nav {
  flex: none;
  display: flex;
  align-items: center;
  color: #4c4c4c;
}
.guest-nav { height: 39px; padding-left: 5px; background: #f6f6f6; border-bottom: 1px solid #c0c0c0; font-size: 13px; }
.back {
  flex: none;
  width: 32px;
  height: 32px;
  margin-right: -5px;
  border: 1px solid #c6c6c6;
  border-radius: 50%;
  background: #f9f9f9;
  z-index: 1;
}
.field {
  display: flex;
  align-items: center;
  min-width: 0;
  height: 28px;
  background: #fff;
  border: 1px solid #ddd;
}
.field input { flex: 1; color: #000; }
.field.url { flex: 1; padding-left: 11px; gap: 5px; border-left: 0; }
.field.search { flex: 0 1 197px; margin-left: 7px; padding: 0 6px; gap: 6px; color: #999; }
.guest-nav .field.search { font-size: 14px; }
.field.search button { color: #888; }
.bar { width: 1px; height: 18px; background: #ccc; }
.bar.tall { height: 36px; }
.reload { width: 34px; padding-right: 6px; color: #888; }
.tools { display: flex; align-items: center; flex: none; padding-left: 9px; }
.tools button { width: 36px; }
.tools .t-star { width: 26px; }
.tools .bar.tall { margin-left: 2px; }
.tools .t-menu { width: 43px; }

.notice {
  flex: none;
  display: flex;
  align-items: center;
  height: 40px;
  padding: 0 13px 0 8px;
  background: #f0f0f0;
  border-bottom: 1px solid #bbb;
  font-size: 11px;
  color: #444;
}
.heart { width: 24px; height: 21px; margin-right: 14px; }
.update {
  width: 79px;
  height: 26px;
  margin-left: 26px;
  border: 1px solid #aaa;
  background: #e1e1e1;
  color: #000;
}
.learn { margin: 0 12px 0 auto; color: #0a8dd6; }

.page { background: #fff; color: #000; }
.page h1 { font-size: 32px; line-height: 38px; }
.page p { margin-top: 21px; font-size: 16px; line-height: 20px; }
.guest-page {
  flex: 1;
  min-height: 0;
  display: flex;
  flex-direction: column;
  padding: 9px 0 0 8px;
  font-family: "Liberation Serif", serif;
}
.tooltip {
  align-self: flex-end;
  margin-top: auto;
  padding: 0 4px;
  border: 1px solid #e4e4e4;
  font: 12px/18px "Open Sans", sans-serif;
  color: #dcdcdc;
}
.guest-taskbar {
  flex: none;
  display: flex;
  height: 40px;
  background: linear-gradient(to right, #020308, #020a12 50%, #020308);
}
.w-btn { width: 49px; padding-top: 2px; border-bottom: 2px solid transparent; }
.w-btn.wide { width: 48px; }
.w-btn.run { width: 40px; margin-right: 9px; border-color: #6db2ea; }
.w-btn.wide + .w-btn.run { margin-left: 7px; margin-right: 5px; }
.w-btn.run.current { width: 48px; margin-right: 5px; background: #35373b; }
.w-tray {
  display: flex;
  align-items: center;
  gap: 9px;
  margin-left: auto;
  padding-right: 8px;
  border-right: 1px solid #8b8f94;
  margin-right: 5px;
  color: #fff;
  font-size: 11px;
}
.w-tray time { margin: 0 -2px 0 4px; line-height: 18px; text-align: center; }
.action { width: 40px; align-self: stretch; background: #16191e; }

.vm-status {
  flex: none;
  display: flex;
  align-items: center;
  justify-content: flex-end;
  gap: 3px;
  height: 23px;
  border-bottom: 1px solid #c6c6ae;
}
.grip {
  width: 12px;
  height: 12px;
  align-self: flex-end;
  background:
    linear-gradient(135deg, #efefef 50%, transparent 50%),
    radial-gradient(#aaa 30%, transparent 35%) 0 0 / 3px 3px;
}
.vm-status .grip { margin: 0 2px 1px 10px; }

/* settings dialog */
.settings {
  grid-row: 1 / 3;
  align-self: end;
  z-index: 1;
  margin: 0 184px 11px 161px;
  padding: 0 10px 10px 9px;
  box-shadow: inset 1px 0 #c6c6ae, inset -1px -1px #c6c6ae;
}
.settings-body { display: flex; gap: 6px; height: 392px; }
.categories {
  list-style: none;
  width: 144px;
  flex: none;
  padding-top: 1px;
  border: 1px solid #b4b4b4;
  background: #fff;
  margin-left: 1px;
}
.categories li { display: flex; align-items: center; gap: 10px; height: 32px; padding-left: 3px; white-space: nowrap; }
.categories .selected { background: #308cc6; color: #fff; }
.details { flex: 1; min-width: 0; display: flex; flex-direction: column; }
.details h3 {
  height: 36px;
  padding: 8px 8px 0;
  font-size: 16px;
  line-height: 20px;
  background: #fff;
  border: 1px solid #999;
}
.adapter-tabs { display: flex; align-items: flex-end; height: 36px; margin-bottom: -1px; z-index: 1; }
.adapter-tabs button {
  width: 89px;
  height: 26px;
  gap: 4px;
  border: 1px solid #b4b4b4;
  border-left-width: 0;
  border-radius: 2px 2px 0 0;
  background: #e8e8e8;
  color: #bebebe;
}
.adapter-tabs .active {
  height: 28px;
  border-left-width: 1px;
  border-bottom-color: #fcfcfc;
  background: #fcfcfc;
  color: #111;
}
.adapter {
  flex: 1;
  display: grid;
  grid-template-columns: 112px minmax(0, 1fr);
  grid-template-rows: 22px 25px 25px 22px;
  gap: 6px;
  align-content: start;
  align-items: center;
  padding: 10px 10px 0;
  border: 1px solid #a4a4a4;
  background: #fcfcfc;
}
.enable { grid-column: 1 / 3; display: flex; align-items: center; gap: 5px; color: #bebebe; }
.enable input {
  appearance: none;
  width: 14px;
  height: 14px;
  margin: 0;
  border: 1px solid #b4b4b4;
  background: #f0f0f0;
  display: grid;
  place-items: center;
}
.enable input::before {
  content: "";
  width: 4px;
  height: 8px;
  border: solid #999;
  border-width: 0 2px 2px 0;
  rotate: 40deg;
  margin-bottom: 2px;
}
.row-label { text-align: right; }
.select { display: grid; align-items: center; }
.select.short { width: 148px; }
.select select {
  grid-area: 1 / 1;
  appearance: none;
  height: 25px;
  padding: 0 4px;
  border: 1px solid #a9a9a9;
  border-radius: 3px;
  background: linear-gradient(#fdfdfd, #ececec);
}
.select::after {
  content: "";
  grid-area: 1 / 1;
  justify-self: end;
  margin-right: 7px;
  border: 4px solid transparent;
  border-top: 5px solid #555;
  border-bottom: 0;
  pointer-events: none;
}
.advanced { grid-column: 1 / 3; justify-self: start; gap: 6px; margin-left: 27px; }
.dialog-buttons { display: flex; justify-content: flex-end; gap: 6px; margin-top: 6px; }
.push {
  width: 80px;
  height: 25px;
  gap: 1px;
  border: 1px solid #a9a9a9;
  border-radius: 3px;
  background: linear-gradient(#fefefe, #ececec);
}
.push.default { border-color: #2d6d99; background: linear-gradient(#fbfcfd, #d8e0e6); }
.push:disabled { color: #bebebe; border-color: #c4c4c4; }
.push:disabled svg { color: #9a9a9a; }
.red { color: #cf2127; }
.green { color: #5c7355; }

/* manager window behind the dialog */
.manager {
  grid-row: 2;
  border-top: 0;
  flex-direction: row;
  flex-wrap: nowrap;
  padding: 0 1px 21px;
  box-shadow: inset 1px 0 #c6c6ae, inset -1px -1px #c6c6ae;
}
.machines { flex: 1; background: #fff; }
.snapshot {
  flex: 1;
  display: flex;
  flex-direction: column;
  gap: 6px;
  margin-top: 2px;
  padding: 11px 10px 10px;
  border: 1px solid #b0b0b0;
  background: #fcfcfc;
}
.snapshot input { height: 25px; border: 1px solid #b4b4b4; border-radius: 3px; background: #fff; }
.snapshot textarea { flex: 1; resize: none; border: 1px solid #b4b4b4; background: #fff; }
.snapshot-buttons { display: flex; justify-content: flex-end; gap: 6px; }
.manager > .grip { margin: 0 1px -19px -13px; }

.pointer { position: absolute; left: 92%; top: 66.8%; width: 12px; height: 20px; z-index: 3; }

/* host browser */
.browser {
  display: flex;
  flex-direction: column;
  min-width: 0;
  padding: 0 2px 2px 3px;
  background: linear-gradient(#3aa0e0, #3aa0e0) 0 0 / 1px 52% no-repeat, #191919;
  color: #333;
}
.b-menu, .b-tabs, .b-nav, .bookmarks { background: #ebebea; }
.b-menu {
  flex: none;
  display: flex;
  gap: 23px;
  height: 27px;
  padding-left: 11px;
  border-bottom: 1px solid #cfcfcf;
  background: #e9e9e7;
}
.b-tabs { flex: none; display: flex; height: 30px; padding-top: 1px; }
.rule { flex: 1; display: flex; align-items: center; border-bottom: 1px solid #9a9a9a; }
.rule.start { flex: none; width: 2px; }
.b-tab { display: flex; }
.b-tab .edge { width: 20px; height: 29px; }
.b-tab-body {
  display: flex;
  align-items: center;
  width: 194px;
  gap: 27px;
  padding-left: 2px;
  border-top: 1px solid #9a9a9a;
}
.rule .newtab { padding-left: 1px; }
.b-nav { height: 41px; padding-left: 4px; }
.b-nav .back { background: #f2f2f1; border-color: #aaa; }
.b-nav .field { height: 24px; border-color: #aaa; border-radius: 2px; }
.b-nav .field.search { flex: 0 1 139px; padding: 0 4px; }
.b-nav .tools button { width: 38px; }
.b-nav .tools .t-star { width: 26px; }
.b-nav .tools .bar.tall { margin-left: 1px; }
.b-nav .tools .t-menu { width: 43px; }
.field input::placeholder { color: #888; opacity: 1; }
.bookmarks {
  flex: none;
  display: flex;
  align-items: center;
  gap: 10px;
  height: 32px;
  padding: 0 13px 0 8px;
  border-bottom: 1px solid #aaa;
}
.bookmarks a, .bookmarks button { display: flex; align-items: center; gap: 2px; white-space: nowrap; }
.bookmarks .more { margin-left: auto; }
.host-page { flex: 1; padding: 9px 8px; font-family: "DejaVu Serif", serif; }

/* desktop panel */
.panel {
  display: flex;
  align-items: center;
  background: linear-gradient(#000 2px, #777 3px, #333 30%, #000 50%, #000 60%, #777);
  color: #fff;
}
.launch { display: flex; align-items: center; gap: 8px; width: 209px; padding-left: 5px; flex: none; }
.kali-menu { width: 28px; height: 22px; }
.pager { width: 79px; height: 22px; }
.tasks { display: flex; gap: 2px; flex: 0 1 1206px; min-width: 0; }
.tasks button {
  flex: 1;
  min-width: 0;
  height: 26px;
  padding: 0 2px;
  gap: 2px;
  justify-content: flex-start;
  border: 1px solid #999;
  border-radius: 4px;
  background: linear-gradient(#fff, #e9e9e7);
  color: #111;
}
.tasks .pressed { background: #c8c5c2; }
.tray { display: flex; align-items: center; gap: 7px; margin-left: auto; padding-right: 5px; }
.tray time { margin: 0 2px 0 1px; }
.cpu { width: 36px; height: 22px; }
```
